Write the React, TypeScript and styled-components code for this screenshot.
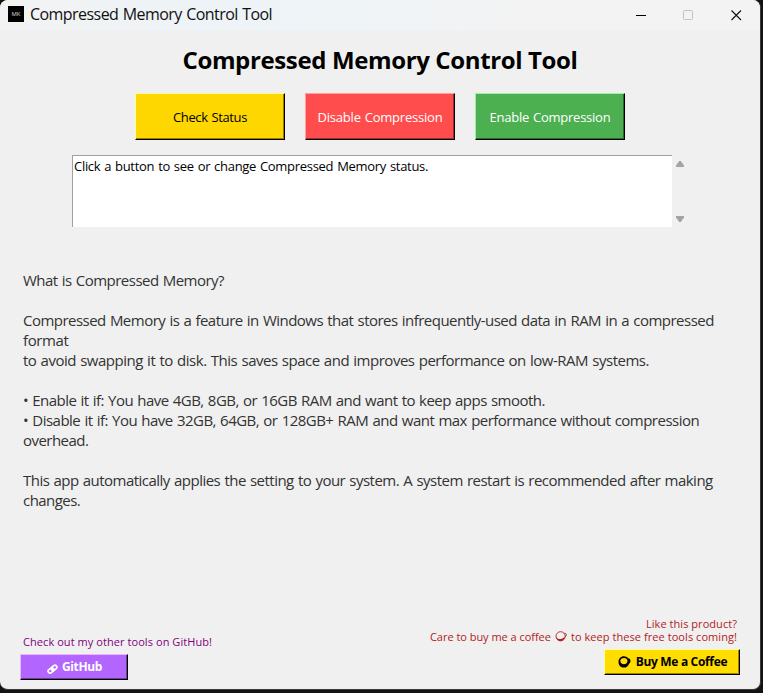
import React from 'react';
import styled, { createGlobalStyle } from 'styled-components';

const GlobalStyle = createGlobalStyle`
  * { box-sizing: border-box; }
  html, body { margin: 0; background: #131313; overflow: hidden; }
  body { font-family: "Open Sans", "Noto Sans", sans-serif; }
  button { font-family: inherit; margin: 0; padding: 0; }
`;

const Window = styled.div`
  width: 761px;
  height: 690px;
  display: flex;
  flex-direction: column;
  background: #f0f0f0;
  border-right: 1px solid #3a3a3a;
  border-bottom: 1px solid #3a3a3a;
  border-radius: 8px;
  overflow: hidden;
`;

const TitleBar = styled.header`
  height: 30px;
  flex: none;
  display: flex;
  align-items: center;
  padding-left: 8px;
  background: linear-gradient(90deg, #f3f3f3 0, #edf3f7 200px, #eff4f7 360px, #f3f3f3 520px);
`;

const AppIcon = styled.div`
  width: 16px;
  height: 16px;
  margin: -2px 6px 0 0;
  display: flex;
  align-items: center;
  justify-content: center;
  background: #000;
  color: #ddd;
  font-size: 6px;
  line-height: 16px;
`;

const Text = styled.span<{ $track?: number; $word?: number }>`
  letter-spacing: ${({ $track = 0 }) => $track}px;
  word-spacing: ${({ $word = 0 }) => $word}px;
  white-space: pre;
`;

const WindowTitle = styled.div`
  flex: 1;
  font-size: 16px;
  line-height: 28px;
  height: 30px;
  color: #111;
`;

const WindowControls = styled.div`
  display: flex;
  height: 28px;
`;

const ControlButton = styled.button`
  width: 47px;
  height: 28px;
  border: 0;
  background: none;
  display: flex;
  align-items: center;
  justify-content: center;

  &:nth-child(-n + 2) {
    margin-left: -1px;
    margin-right: 1px;
  }
`;

const Heading = styled.h1`
  margin: 13px 0 0;
  height: 34px;
  font-size: 24px;
  line-height: 34px;
  font-weight: 700;
  text-align: center;
  color: #000;
`;

const ActionRow = styled.div`
  display: flex;
  justify-content: center;
  gap: 20px;
  margin-top: 16px;
`;

const RaisedButton = styled.button<{ $bg: string; $light: string; $shade: string; $fg: string }>`
  display: flex;
  align-items: center;
  justify-content: center;
  background: ${({ $bg }) => $bg};
  color: ${({ $fg }) => $fg};
  border: 1px solid;
  border-color: ${({ $light }) => `${$light} #000 #000 ${$light}`};
  box-shadow: inset -1px -1px 0 ${({ $shade }) => $shade};
`;

const ActionButton = styled(RaisedButton)`
  width: 150px;
  height: 47px;
  font-size: 13px;
  line-height: 18px;
  padding-top: 1px;
`;

const StatusRow = styled.div`
  display: flex;
  margin: 15px 0 0 72px;
`;

const StatusBox = styled.div`
  width: 600px;
  height: 72px;
  padding: 1px 0 0 1px;
  background: #fff;
  border-top: 1px solid #a0a0a0;
  border-left: 1px solid #a0a0a0;
  font-size: 13px;
  line-height: 18px;
  color: #000;
`;

const ScrollBar = styled.div`
  width: 16px;
  display: flex;
  flex-direction: column;
  align-items: center;
  justify-content: space-between;
  padding: 6px 0 5px;
`;

const Info = styled.section`
  flex: 1;
  margin: 43px 0 0 23px;
  font-size: 15px;
  line-height: 20px;
  color: #333;
`;

const InfoLine = styled.div`
  height: 20px;
`;

const Footer = styled.footer`
  flex: none;
  display: flex;
  justify-content: space-between;
  align-items: flex-end;
  padding: 0 20px 9px;
  font-size: 11px;
  line-height: 13px;
`;

const FooterColumn = styled.div<{ $end?: boolean }>`
  display: flex;
  flex-direction: column;
  align-items: ${({ $end }) => ($end ? 'flex-end' : 'flex-start')};
  ${({ $end }) => ($end ? 'padding-bottom: 5px;' : '')}
`;

const FooterNote = styled.div<{ $color: string }>`
  margin: 0 3px 6px;
  color: ${({ $color }) => $color};
`;

const NoteLine = styled.div`
  display: flex;
  justify-content: flex-end;
  align-items: center;
  height: 13px;
`;

const LinkButton = styled(RaisedButton)<{ $width: number; $gap: number }>`
  width: ${({ $width }) => $width}px;
  height: 26px;
  gap: ${({ $gap }) => $gap}px;
  padding-left: 1px;
  font-size: 12px;
  line-height: 16px;
  font-weight: 700;
`;

const InlineIcon = styled.svg`
  flex: none;
  margin: 0 4px;
`;

const ButtonIcon = styled.svg<{ $drop?: number }>`
  flex: none;
  margin-top: ${({ $drop = 0 }) => $drop}px;
`;

const INFO_LINES: [string, number][] = [
  ['What is Compressed Memory?', -0.528],
  ['', 0],
  ['Compressed Memory is a feature in Windows that stores infrequently-used data in RAM in a compressed', -0.525],
  ['format', -0.4],
  ['to avoid swapping it to disk. This saves space and improves performance on low-RAM systems.', -0.486],
  ['', 0],
  ['• Enable it if: You have 4GB, 8GB, or 16GB RAM and want to keep apps smooth.', -0.531],
  ['• Disable it if: You have 32GB, 64GB, or 128GB+ RAM and want max performance without compression', -0.517],
  ['overhead.', -0.54],
  ['', 0],
  ['This app automatically applies the setting to your system. A system restart is recommended after making', -0.522],
  ['changes.', -0.54],
];

export default function App() {
  return (
    <>
      <GlobalStyle />
      <Window>
        <TitleBar>
          <AppIcon>MK</AppIcon>
          <WindowTitle><Text $track={-0.55} $word={0.8}>Compressed Memory Control Tool</Text></WindowTitle>
          <WindowControls>
            <ControlButton aria-label="Minimize">
              <svg width="11" height="11"><path d="M0 5.500h10" stroke="#000" /></svg>
            </ControlButton>
            <ControlButton aria-label="Maximize">
              <svg width="11" height="11"><rect x=".5" y=".5" width="9" height="9" rx="1" fill="none" stroke="#c2c2c2" /></svg>
            </ControlButton>
            <ControlButton aria-label="Close">
              <svg width="11" height="11"><path d="M.5.5l9.500 9.500M10 .5L.5 10" stroke="#111" strokeWidth="1.1" /></svg>
            </ControlButton>
          </WindowControls>
        </TitleBar>

        <Heading><Text $track={-0.369}>Compressed Memory Control Tool</Text></Heading>

        <ActionRow>
          <ActionButton $bg="#ffd700" $light="#ffff9a" $shade="#997f00" $fg="#000">
            <Text $track={-0.37} $word={0.8}>Check Status</Text>
          </ActionButton>
          <ActionButton $bg="#ff4d4d" $light="#ffa0a0" $shade="#992e2e" $fg="#fff">
            <Text $track={-0.21} $word={0.8}>Disable Compression</Text>
          </ActionButton>
          <ActionButton $bg="#4caf50" $light="#a0f0a4" $shade="#2d6930" $fg="#fff">
            <Text $track={-0.24} $word={0.8}>Enable Compression</Text>
          </ActionButton>
        </ActionRow>

        <StatusRow>
          <StatusBox>
            <Text $track={-0.295} $word={0.8}>Click a button to see or change Compressed Memory status.</Text>
          </StatusBox>
          <ScrollBar>
            <svg width="8" height="6"><path d="M3.200 0h1.600L8 4.500V6H0V4.500Z" fill="#a3a3a3" /></svg>
            <svg width="8" height="6"><path d="M0 0h8v1.500L4.800 6H3.200L0 1.500Z" fill="#a3a3a3" /></svg>
          </ScrollBar>
        </StatusRow>

        <Info>
          {INFO_LINES.map(([line, track], i) => (
            <InfoLine key={i}><Text $track={track} $word={0.8}>{line}</Text></InfoLine>
          ))}
        </Info>

        <Footer>
          <FooterColumn>
            <FooterNote $color="#800080"><Text $track={0.066}>Check out my other tools on GitHub!</Text></FooterNote>
            <LinkButton $width={108} $gap={4} $bg="#b266ff" $light="#efb4ff" $shade="#6b3d99" $fg="#fff">
              <ButtonIcon $drop={3} width="11" height="10" viewBox="0 0 11 10">
                <g fill="none" stroke="#fff" strokeWidth="1.7">
                  <rect x="-3" y="-1.900" width="6" height="3.800" rx="1.900" transform="translate(3.900 6.500) rotate(-38)" />
                  <rect x="-3" y="-1.900" width="6" height="3.800" rx="1.900" transform="translate(7.100 3.800) rotate(-38)" />
                </g>
              </ButtonIcon>
              <Text $track={-0.35}>GitHub</Text>
            </LinkButton>
          </FooterColumn>

          <FooterColumn $end>
            <FooterNote $color="#b22222">
              <NoteLine><Text $track={0.05}>Like this product?</Text></NoteLine>
              <NoteLine>
                <Text $track={-0.03}>Care to buy me a coffee</Text>
                <InlineIcon width="12" height="11" viewBox="0 0 12 11">
                  <ellipse cx="5.600" cy="5.300" rx="4.600" ry="4.600" fill="none" stroke="currentColor" strokeWidth=".9" />
                  <path d="M9.300 2.300c1.300-.1 2.200.5 2.100 1.500 0 .8-.6 1.500-1.500 1.900" fill="none" stroke="currentColor" strokeWidth="1" />
                  <path d="M1.200 5.500c.8 2 2.200 2.600 4.300 2.500 1.800-.1 3.200-.9 4.300-2.400-.1 2.700-1.800 4.500-4.300 4.500S1.300 8.300 1.200 5.500Z" fill="currentColor" />
                </InlineIcon>
                <Text $track={0.06}>to keep these free tools coming!</Text>
              </NoteLine>
            </FooterNote>
            <LinkButton $width={136} $gap={5} $bg="#ffdd00" $light="#ffff9a" $shade="#998500" $fg="#000">
              <ButtonIcon width="13" height="12" viewBox="0 0 13 12">
                <path
                  d="M5.800.3C2.800.3.500 2.600.500 5.900c0 3.300 2.300 5.700 5.300 5.700 2.700 0 4.700-1.500 5.200-3.900 1-.6 1.500-1.700 1.500-2.800 0-1.800-1-2.600-2.500-2.700C9.100 1 7.600.3 5.800.3Zm.2 1.700c2.100 0 3.500 1.200 3.500 3S8.100 8.200 6 8.200 2.300 6.800 2.300 5 3.900 2 6 2Z"
                  fill="currentColor"
                  fillRule="evenodd"
                />
              </ButtonIcon>
              <Text $track={-0.33}>Buy Me a Coffee</Text>
            </LinkButton>
          </FooterColumn>
        </Footer>
      </Window>
    </>
  );
}
